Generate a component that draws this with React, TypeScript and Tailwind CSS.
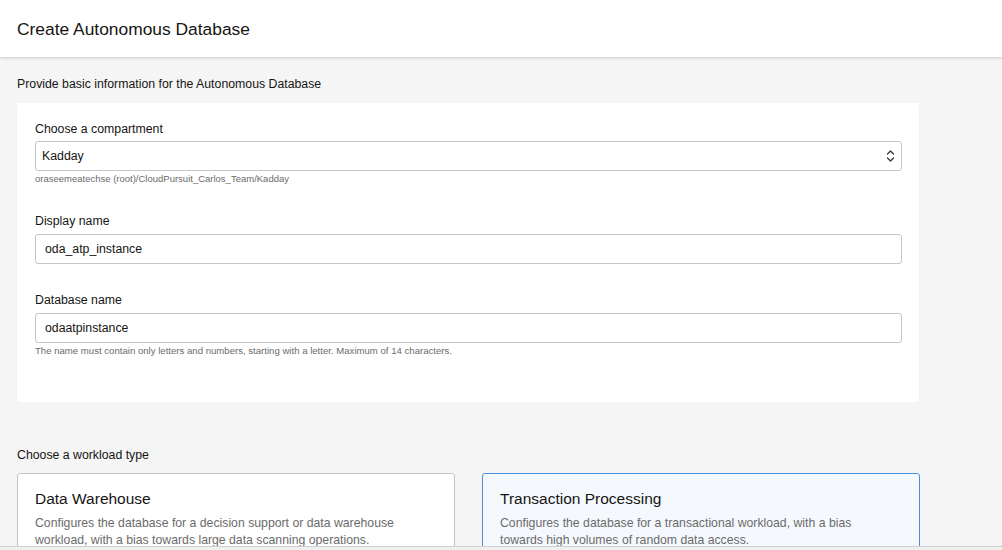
import React from "react";

const fieldLabel = "text-[12.3px] text-[#161513] leading-[16px]";

export default function App() {
  return (
    <div
      className="h-[550px] w-[1002px] overflow-hidden bg-[#f5f5f5] text-[#161513]"
      style={{ fontFamily: '"Liberation Sans", Arial, sans-serif' }}
    >
      {/* HEADER */}
      <div className="relative z-10 flex h-[57px] items-center bg-white px-[17px] shadow-[0_1px_3px_rgba(0,0,0,0.18)]">
        <h1 className="text-[17.4px] leading-[22px] text-[#161513]">
          Create Autonomous Database
        </h1>
      </div>

      <div className="h-[489px] overflow-hidden">
        <div className="px-[17px] pt-[19px]">
          <p className="text-[12.3px] leading-[16px]">
            Provide basic information for the Autonomous Database
          </p>

          {/* BASIC INFO PANEL */}
          <div className="mt-[11px] h-[299px] w-[902px] rounded-[2px] bg-white px-[18px] pt-[18px]">
            <div className={fieldLabel}>Choose a compartment</div>
            <div className="mt-[4px] flex h-[30px] w-[867px] items-center justify-between rounded-[3px] border border-[#c6c6c6] bg-white pl-[6px] pr-[6px]">
              <span className="text-[12.3px]">Kadday</span>
              <svg width="9" height="14" viewBox="0 0 9 14" fill="none" stroke="#3a3a3a" strokeWidth="1.4" strokeLinecap="round" strokeLinejoin="round">
                <path d="M1.5 5 L4.5 2 L7.5 5" />
                <path d="M1.5 9 L4.5 12 L7.5 9" />
              </svg>
            </div>
            <div className="mt-[2px] text-[9.5px] leading-[12px] text-[#6b6b6b]">
              oraseemeatechse (root)/CloudPursuit_Carlos_Team/Kadday
            </div>

            <div className={`${fieldLabel} mt-[28px]`}>Display name</div>
            <div className="mt-[5px] flex h-[30px] w-[867px] items-center rounded-[3px] border border-[#c6c6c6] bg-white px-[9px]">
              <span className="text-[12.3px]">oda_atp_instance</span>
            </div>

            <div className={`${fieldLabel} mt-[28px]`}>Database name</div>
            <div className="mt-[5px] flex h-[30px] w-[867px] items-center rounded-[3px] border border-[#c6c6c6] bg-white px-[9px]">
              <span className="text-[12.3px]">odaatpinstance</span>
            </div>
            <div className="mt-[2px] text-[9.6px] leading-[12px] text-[#6b6b6b]">
              The name must contain only letters and numbers, starting with a letter. Maximum of 14 characters.
            </div>
          </div>

          <p className="mt-[45px] text-[12.3px] leading-[16px]">
            Choose a workload type
          </p>

          {/* WORKLOAD CARDS */}
          <div className="mt-[10px] flex gap-[27px]">
            <div className="h-[120px] w-[438px] rounded-[3px] border border-[#c6c6c6] bg-white px-[17px] pt-[15px]">
              <div className="text-[15.5px] leading-[20px]">Data Warehouse</div>
              <div className="mt-[6px] w-[380px] text-[12.25px] leading-[17px] text-[#6b6b6b]">
                Configures the database for a decision support or data warehouse workload, with a bias towards large data scanning operations.
              </div>
            </div>
            <div className="h-[120px] w-[438px] rounded-[3px] border border-[#4a90e2] bg-[#f5f9fe] px-[17px] pt-[15px]">
              <div className="text-[15.5px] leading-[20px]">Transaction Processing</div>
              <div className="mt-[6px] w-[380px] text-[12.25px] leading-[17px] text-[#6b6b6b]">
                Configures the database for a transactional workload, with a bias towards high volumes of random data access.
              </div>
            </div>
          </div>
        </div>
      </div>

      {/* BOTTOM BAR */}
      <div className="h-[4px] border-t border-[#cfcfcf] bg-[#f0f0f0]" />
    </div>
  );
}
